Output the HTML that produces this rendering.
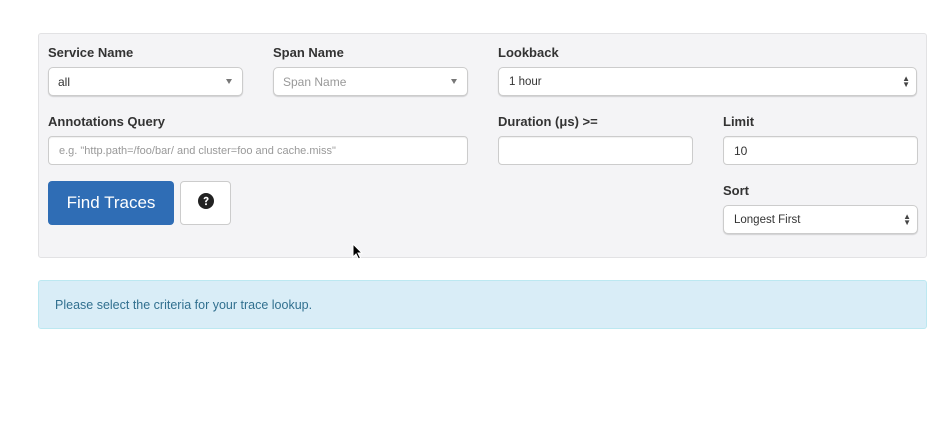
<!DOCTYPE html><html><head><style>
body{margin:0;width:937px;height:448px;background:#fff;font-family:"Liberation Sans",sans-serif;position:relative;overflow:hidden}
.a{position:absolute}
.panel{left:38px;top:33px;width:889px;height:225px;background:#f4f4f6;border:1px solid #e2e2e4;border-radius:3px;box-sizing:border-box}
.lbl{font-weight:bold;font-size:13px;color:#333}
.in{background:#fff;border:1px solid #ccc;border-radius:4px;box-sizing:border-box;font-size:12px;color:#333;padding-left:10px;display:flex;align-items:center;box-shadow:inset 0 1px 1px rgba(0,0,0,.06)}
.ph{color:#999}
.sel{border-radius:5px;box-shadow:0 1px 1px rgba(0,0,0,.15)}
.car{position:absolute;right:10px;top:11px;width:0;height:0;border-left:3.5px solid transparent;border-right:3.5px solid transparent;border-top:5px solid #777}
.ud{position:absolute;right:6px;top:8px;font-size:8px;line-height:6px;color:#444}
</style></head><body>
<div class="a panel"></div>
<div class="a lbl" style="left:48px;top:45px">Service Name</div>
<div class="a lbl" style="left:273px;top:45px">Span Name</div>
<div class="a lbl" style="left:498px;top:45px">Lookback</div>
<div class="a in sel" style="left:48px;top:67px;width:195px;height:29px;padding-left:9px">all<span class="car"></span></div>
<div class="a in sel ph" style="left:273px;top:67px;width:195px;height:29px;padding-left:9px">Span Name<span class="car"></span></div>
<div class="a in sel" style="left:498px;top:67px;width:419px;height:29px;font-size:11.5px">1 hour<span class="ud">▲<br>▼</span></div>
<div class="a lbl" style="left:48px;top:114px">Annotations Query</div>
<div class="a lbl" style="left:498px;top:114px">Duration (μs) &gt;=</div>
<div class="a lbl" style="left:723px;top:114px">Limit</div>
<div class="a in ph" style="left:48px;top:136px;width:420px;height:29px;font-size:11px">e.g. "http.path=/foo/bar/ and cluster=foo and cache.miss"</div>
<div class="a in" style="left:498px;top:136px;width:195px;height:29px"></div>
<div class="a in" style="left:723px;top:136px;width:195px;height:29px">10</div>
<div class="a" style="left:48px;top:181px;width:126px;height:44px;background:#2f6db5;border-radius:4px;color:#fff;font-size:17px;display:flex;align-items:center;justify-content:center">Find Traces</div>
<div class="a" style="left:180px;top:181px;width:51px;height:44px;background:#fff;border:1px solid #ccc;border-radius:4px;box-sizing:border-box;display:flex;align-items:center;justify-content:center;padding-bottom:4px">
<svg width="16" height="16" viewBox="0 0 16 16"><circle cx="8" cy="8" r="8" fill="#222"/><path d="M5.6 6.1C5.7 4.6 6.7 3.8 8.1 3.8c1.5 0 2.5.9 2.5 2.1 0 1.5-1.8 1.7-1.8 3v.3H7.1v-.4c0-1.7 1.7-1.9 1.7-2.8 0-.5-.3-.8-.8-.8s-.8.3-.9.9z" fill="#fff"/><rect x="7.1" y="10.3" width="1.8" height="1.8" fill="#fff"/></svg></div>
<div class="a lbl" style="left:723px;top:183px">Sort</div>
<div class="a in sel" style="left:723px;top:205px;width:195px;height:29px;font-size:11.5px">Longest First<span class="ud">▲<br>▼</span></div>
<svg class="a" style="left:352px;top:243px" width="12" height="17" viewBox="0 0 12 17"><path d="M1 1v13l3-3 2.5 5 2-1-2.5-5h4z" fill="#000" stroke="#fff" stroke-width="1"/></svg>
<div class="a" style="left:38px;top:280px;width:889px;height:49px;background:#d9edf7;border:1px solid #bce8f1;border-radius:3px;box-sizing:border-box;color:#31708f;font-size:12.5px;padding:17px 0 0 16px">Please select the criteria for your trace lookup.</div>
</body></html>
